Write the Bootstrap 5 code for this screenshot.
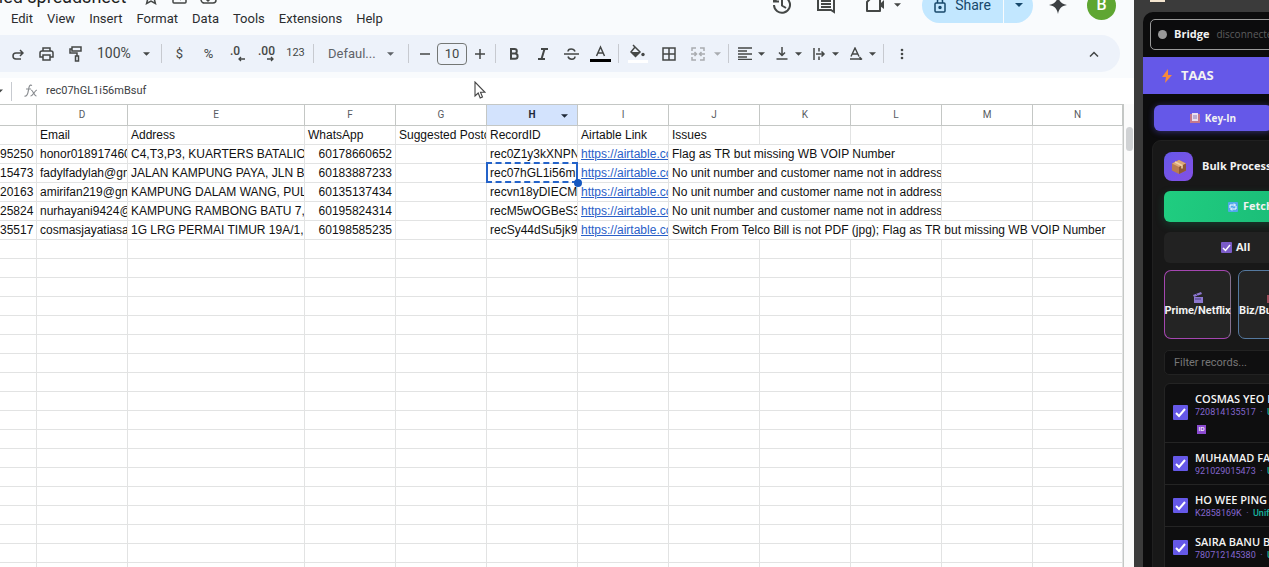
<!DOCTYPE html>
<html lang="en">
<head>
<meta charset="utf-8">
<meta name="viewport" content="width=device-width, initial-scale=1">
<title>Untitled spreadsheet</title>
<link rel="stylesheet" href="https://cdn.jsdelivr.net/npm/bootstrap@5.3.0/dist/css/bootstrap.min.css">
<style>
  body { font-family: Roboto, "Liberation Sans", sans-serif; background: #f9fbfd; color: #444746; }
  svg { display: block; flex: none; }
  button { border: 0; background: none; padding: 0; color: inherit; }
  .doc { min-width: 0; }
  .doc-top { margin-top: -24px; height: 59px; }
  .doc-names { padding-bottom: 6px; }
  .doc-title { font-size: 18px; line-height: 24px; margin-left: -39px; gap: 13px; color: #1f1f1f; }
  .menus { font-size: 13px; line-height: 20px; gap: 14px; padding-left: 11px; }
  .menus a { color: #2b2d2f; text-decoration: none; }
  .doc-actions { height: 58px; padding-right: 18px; }
  .meet { margin-left: 24px; }
  .share { height: 35px; margin-left: 21px; background: #c2e7ff; color: #17486b; border-radius: 18px; overflow: hidden; font-size: 14px; font-weight: 500; }
  .share button { height: 35px; }
  .share-main { width: 81px; gap: 9px; }
  .share-more { width: 30px; border-left: 1px solid #f9fbfd; }
  .avatar-dot { width: 29px; height: 29px; margin-left: 20px; background: #5fa632; color: #fff; font-size: 16px; font-weight: 500; }
  .tools { height: 37px; background: #edf2fa; border-radius: 0 19px 19px 0; margin-right: 14px; padding-left: 3px; font-size: 13px; }
  .tools button { height: 28px; display: flex; align-items: center; justify-content: center; flex: none; }
  .t { width: 29px; }
  .t-num { font-size: 11px; }
  .t-wide { width: 32px; }
  .t-step { width: 25px; }
  .tools .t-zoom { width: 68px; justify-content: space-between; padding: 0 8px 0 7px; font-size: 14px; }
  .tools .t-font { width: 88px; justify-content: space-between; padding: 0 11px; font-size: 13px; color: #5f6368; }
  .tools .t-drop { width: 37px; justify-content: flex-start; padding-left: 2px; }
  .t-drop svg:first-child { margin: 0 6px 0 4px; }
  .caret-off { margin: 0 4px 0 2px; color: #a9acb0; }
  .rule { width: 1px; height: 19px; background: #c7cad0; margin: 0 3px; flex: none; }
  .size-box { width: 30px; height: 22px; border: 1px solid #747775; border-radius: 4px; background: transparent; text-align: center; font-size: 13px; padding: 0; color: #444746; }
  .formula { height: 26px; margin-top: 6px; background: #fff; }
  .formula input { border: 0; background: transparent; font-size: 11px; padding: 0; color: #3c4043; width: 300px; }
  .grid-area { background: #fff; min-height: 0; }
  .cells { table-layout: fixed; border-collapse: separate; border-spacing: 0; font: 12px/18px "Liberation Sans", Arial, sans-serif; color: #111; width: 1123px; flex: none; }
  .cells th { height: 22px; padding: 0; border: solid #c4c7c5; border-width: 1px 1px 1px 0; font: 10px/20px Roboto, sans-serif; color: #575b5f; text-align: center; }
  .cells td { height: 19px; padding: 0 0 0 3px; border: solid #e2e3e3; border-width: 0 1px 1px 0; white-space: nowrap; overflow: hidden; }
  .cells th.on { background: #d3e3fd; font-weight: 700; color: #1f2937; position: relative; }
  .cells th.on svg { position: absolute; right: 9px; top: 9px; }
  .cells td.n { text-align: right; padding: 0 3px 0 0; }
  .cells td a { color: #2a60c8; }
  .cells td.picked { overflow: visible; position: relative; }
  .picked span { display: block; overflow: hidden; }
  .picked::before { content: ""; position: absolute; inset: -2px -1px -1px -1px; border: 2px dashed #2463c9; border-left-style: solid; border-right-style: solid; }
  .picked::after { content: ""; position: absolute; right: -5px; bottom: -5px; width: 8px; height: 8px; border-radius: 50%; background: #1558c0; z-index: 1; }
  .vscroll { border-left: 1px solid #c4c7c5; padding-top: 23px; background: #fbfbfb; }
  .vscroll div { width: 7px; height: 24px; border-radius: 4px; background: #d0d2d4; margin: 0 auto; }
  .pointer { position: absolute; left: 474px; top: 81px; z-index: 3; }

  .side { width: 135px; background: #3b3b3b; flex: none; padding: 12px 0 0 9px; font-family: "Open Sans", sans-serif; color: #f2f2f2; position: relative; }
  .side-top { position: absolute; left: 16px; top: 0; width: 15px; height: 2px; background: #f3e5cf; }
  .side-in { width: 300px; background: #0c0c0d; border-radius: 10px 0 0 0; padding-top: 7px; }
  .bridge { margin-left: 7px; height: 31px; border: 1px solid #9a9a9a; border-radius: 5px; padding-left: 7px; font-size: 11px; gap: 7px; }
  .bridge i { width: 9px; height: 9px; border-radius: 50%; background: #999; }
  .bridge span { color: #5d5d5d; font-size: 10px; }
  .brand { height: 37px; margin-top: 7px; background: #6558e8; padding-left: 19px; gap: 9px; font-size: 13px; }
  .keyin { margin: 11px 0 0 11px; width: 118px; height: 26px; background: #6558e8 !important; border-radius: 6px; font-size: 10px; font-weight: 700; gap: 5px; box-shadow: 0 1px 6px #6558e870; }
  .bulk { margin: 9px 0 0 9px; background: #181818; border: 1px solid #202020; border-radius: 9px; padding: 11px; height: 440px; }
  .bulk-ico { width: 29px; height: 29px; border-radius: 8px; background: linear-gradient(135deg, #6558e8, #8450e5); }
  .bulk-name { font-size: 11px; gap: 9px; }
  .bulk button { font-weight: 700; font-size: 11px; }
  .fetch { height: 31px; margin-top: 10px; background: linear-gradient(100deg, #20cd80, #14a96e) !important; border-radius: 6px; padding-left: 64px !important; gap: 5px; box-shadow: 0 3px 9px #10a86a40; }
  .all { height: 31px; margin-top: 10px; background: #222 !important; border-radius: 6px; padding-left: 57px !important; gap: 4px; }
  .tiles { gap: 7px; margin-top: 7px; font-family: Roboto, sans-serif; }
  .tile { width: 67px; height: 69px; border: 1px solid #a446b0 !important; border-right-color: #85718f !important; border-radius: 7px; background: #242424 !important; line-height: 13px; white-space: nowrap; }
  .tile.blue { border-color: #55799f !important; }
  .filter { height: 25px; width: 260px; margin-top: 11px; background: #0f0f10; border: 1px solid #222; border-radius: 5px; color: #ddd; font: 11px Roboto, sans-serif; padding: 0 9px; display: block; }
  .filter::placeholder { color: #777; }
  .people { margin-top: 8px; border: 1px solid #242424; border-radius: 6px 0 0 0; background: #0e0e0f; width: 260px; }
  .person { border-bottom: 1px solid #242424; padding: 0 0 0 8px; gap: 7px; height: 42px; white-space: nowrap; font-size: 11px; line-height: 15px; font-weight: 600; color: #f4f4f4; }
  .person.tall { height: 59px; padding-bottom: 2px; }
  .person small { display: block; font: 400 9px/13px Roboto, sans-serif; color: #8467cd; }
  .person em { font-style: normal; color: #16b3a0; font-weight: 500; }
  .person input { appearance: none; width: 15px; height: 15px; margin: 0; background: #6558e8 url("data:image/svg+xml,%3Csvg xmlns='http://www.w3.org/2000/svg' viewBox='0 0 15 15'%3E%3Cpath d='M3 8l3 3 6-7' fill='none' stroke='white' stroke-width='2'/%3E%3C/svg%3E"); border-radius: 1px; flex: none; }
  .id-chip { width: 9px; height: 9px; background: #8b4ad0; color: #fff; font-size: 6px; line-height: 9px; text-align: center; margin: 6px 0 0 2px; }
</style>
</head>
<body class="overflow-hidden">
<svg class="d-none">
  <symbol id="dn" viewBox="0 0 8 4"><path d="M0 0h8L4 4z" fill="currentColor"/></symbol>
</svg>
<div class="d-flex vh-100 overflow-hidden position-relative">
  <main class="doc flex-fill d-flex flex-column overflow-hidden">
    <header class="doc-top d-flex justify-content-between flex-shrink-0">
      <div class="doc-names d-flex flex-column justify-content-end">
        <div class="doc-title d-flex align-items-center text-nowrap">Untitled spreadsheet
          <svg class="ms-1" width="16" height="16" viewBox="0 0 16 16" fill="none" stroke="#444746" stroke-width="1.5"><path d="M8 1.500l2 4.500 5 .4-3.800 3.300 1.200 4.800L8 12l-4.400 2.500 1.200-4.800L1 6.400 6 6z"/></svg>
          <svg width="15" height="16" viewBox="0 0 15 16" fill="none" stroke="#444746" stroke-width="1.500"><rect x="1" y="2" width="13" height="12" rx="1"/><path d="M5 8h6M8 5l3 3-3 3"/></svg>
          <svg width="17" height="16" viewBox="0 0 17 16" fill="none" stroke="#444746" stroke-width="1.500"><path d="M5 14h8a3 3 0 0 0 0-6 5 5 0 0 0-9-1 3.500 3.500 0 0 0 1 7zM6 10l2 2 4-4"/></svg>
        </div>
        <nav class="menus d-flex"><a href="#">Edit</a><a href="#">View</a><a href="#">Insert</a><a href="#">Format</a><a href="#">Data</a><a href="#">Tools</a><a href="#">Extensions</a><a href="#">Help</a></nav>
      </div>
      <div class="doc-actions d-flex align-items-center">
        <button aria-label="Version history"><svg width="20" height="20" viewBox="0 0 20 20" fill="none" stroke="#444746" stroke-width="2"><path d="M2 10a8 8 0 1 0 2.500-6L2 6.500M2 1.500v5h5M10 5v5.500l4 2.500"/></svg></button>
        <button class="ms-4" aria-label="Comments"><svg width="20" height="20" viewBox="0 0 20 20" fill="none" stroke="#444746" stroke-width="2"><path d="M2 2h16v15l-3-2H2zM5 6h10M5 9h10M5 12h10"/></svg></button>
        <button class="meet d-flex align-items-center gap-2 ps-1" aria-label="Meet"><svg width="22" height="20" viewBox="0 0 22 20"><path d="M7 3h9v13H3V7z" fill="none" stroke="#444746" stroke-width="2" stroke-linejoin="round"/><path d="M16 9l4-4v9l-4-3z" fill="#444746"/></svg><svg width="7" height="4"><use href="#dn"/></svg></button>
        <div class="share d-flex">
          <button class="share-main d-flex align-items-center justify-content-center"><svg width="12" height="16" viewBox="0 0 12 16" fill="none" stroke="currentColor" stroke-width="1.500"><rect x="1" y="6" width="10" height="9" rx="1"/><path d="M3.500 6V4a2.500 2.500 0 0 1 5 0v2"/><circle cx="6" cy="10.500" r="1" fill="currentColor"/></svg>Share</button>
          <button class="share-more d-flex align-items-center justify-content-center" aria-label="Share options"><svg width="8" height="4"><use href="#dn"/></svg></button>
        </div>
        <svg class="ms-3" width="18" height="18" viewBox="0 0 18 18" fill="#3c4043"><path d="M9 0c1 5.500 3.500 8 9 9-5.500 1-8 3.500-9 9-1-5.500-3.500-8-9-9 5.500-1 8-3.500 9-9z"/></svg>
        <button class="avatar-dot rounded-circle">B</button>
      </div>
    </header>

    <div class="tools d-flex align-items-center flex-shrink-0" role="toolbar">
      <button class="t" aria-label="Redo"><svg width="12" height="12" viewBox="0 0 12 12" fill="none" stroke="currentColor" stroke-width="1.500"><path d="M8 2l3 3-3 3M11 5H4a3 3 0 0 0 0 6h5"/></svg></button>
      <button class="t" aria-label="Print"><svg width="15" height="14" viewBox="0 0 15 14" fill="none" stroke="currentColor" stroke-width="1.500"><path d="M4 4V1h7v3M4 10H1V6q0-2 2-2h9q2 0 2 2v4h-3M4 8h7v5H4z"/></svg></button>
      <button class="t" aria-label="Paint format"><svg width="14" height="16" viewBox="0 0 14 16" fill="none" stroke="currentColor" stroke-width="1.500"><path d="M3 1h9v4H3zM3 3H1v4h7v3M6.500 10h3v5h-3z"/></svg></button>
      <button class="t-zoom">100%<svg width="7" height="4"><use href="#dn"/></svg></button>
      <span class="rule"></span>
      <button class="t">$</button>
      <button class="t">%</button>
      <button class="t" aria-label="Decrease decimals"><svg width="16" height="16" viewBox="0 0 16 16"><text x="0" y="9" font-size="12" font-weight="500" fill="currentColor">.0</text><path d="M15 13H9M11 11l-2 2 2 2" fill="none" stroke="currentColor" stroke-width="1.300"/></svg></button>
      <button class="t" aria-label="Increase decimals"><svg width="18" height="16" viewBox="0 0 18 16"><text x="0" y="9" font-size="12" font-weight="500" fill="currentColor">.00</text><path d="M9 13h6M13 11l2 2-2 2" fill="none" stroke="currentColor" stroke-width="1.300"/></svg></button>
      <button class="t t-num">123</button>
      <span class="rule"></span>
      <button class="t-font">Defaul...<svg width="7" height="4"><use href="#dn"/></svg></button>
      <span class="rule"></span>
      <button class="t-step" aria-label="Smaller"><svg width="10" height="10"><path d="M0 5h10" stroke="currentColor" stroke-width="1.500"/></svg></button>
      <input class="size-box" aria-label="Font size" value="10">
      <button class="t-step" aria-label="Larger"><svg width="10" height="10"><path d="M0 5h10M5 0v10" stroke="currentColor" stroke-width="1.500"/></svg></button>
      <span class="rule"></span>
      <button class="t" aria-label="Bold"><svg width="10" height="12" viewBox="0 0 10 12" fill="none" stroke="currentColor" stroke-width="2"><path d="M2 1h3.500a2.300 2.300 0 0 1 0 4.600H2zM2 5.600h4a2.600 2.600 0 0 1 0 5.200H2z"/></svg></button>
      <button class="t" aria-label="Italic"><svg width="10" height="12" viewBox="0 0 10 12" fill="none" stroke="currentColor" stroke-width="2"><path d="M3 1h7M0 11h7M6.500 1l-3 10"/></svg></button>
      <button class="t" aria-label="Strikethrough"><svg width="15" height="12" viewBox="0 0 15 12" fill="none" stroke="currentColor" stroke-width="1.500"><path d="M0 6h15M11 3.500C10 0 4 0 4 3.500M4 8.500c1 3.500 7 3.500 7 0"/></svg></button>
      <button class="t" aria-label="Text color"><svg width="21" height="18" viewBox="0 0 21 18"><path d="M6.500 11L10.500 2l4 9M8 8h5" fill="none" stroke="currentColor" stroke-width="1.500"/><path d="M0 14h21v3H0z" fill="#000"/></svg></button>
      <span class="rule"></span>
      <button class="t-wide" aria-label="Fill color"><svg width="20" height="20" viewBox="0 0 20 20"><path d="M5 1l2 2M7 3l5 5-4.500 4.500L3 8z" fill="none" stroke="currentColor" stroke-width="1.500"/><path d="M3 8h9l-4.500 4.500z" fill="currentColor"/><circle cx="15" cy="10.500" r="1.700" fill="currentColor"/><path d="M0 16h20v3H0z" fill="#fff"/></svg></button>
      <button class="t" aria-label="Borders"><svg width="14" height="14" viewBox="0 0 14 14" fill="none" stroke="currentColor" stroke-width="1.500"><path d="M1 1h12v12H1zM7 1v12M1 7h12"/></svg></button>
      <button class="t" aria-label="Merge cells"><svg width="14" height="14" viewBox="0 0 14 14" fill="none" stroke="#a9acb0" stroke-width="1.500"><path d="M5 1H1v3M9 1h4v3M5 13H1v-3M9 13h4v-3M0 7h5M3.500 5l2 2-2 2M14 7H9M10.500 5l-2 2 2 2"/></svg></button>
      <svg width="7" height="4" class="caret-off"><use href="#dn"/></svg>
      <span class="rule"></span>
      <button class="t-drop" aria-label="Align"><svg width="14" height="13" viewBox="0 0 14 13" stroke="currentColor" stroke-width="1.500"><path d="M0 1h14M0 4h9M0 7h14M0 10h9M0 12.500h14"/></svg><svg width="7" height="4"><use href="#dn"/></svg></button>
      <button class="t-drop" aria-label="Vertical align"><svg width="14" height="13" viewBox="0 0 14 13" fill="none" stroke="currentColor" stroke-width="1.500"><path d="M7 0v8M4 5.500l3 3 3-3M1.500 12h11"/></svg><svg width="7" height="4"><use href="#dn"/></svg></button>
      <button class="t-drop" aria-label="Wrapping"><svg width="14" height="12" viewBox="0 0 14 12" fill="none" stroke="currentColor" stroke-width="1.500"><path d="M2 0v12M7 0v3.500M7 8.500V12M4 6h8M9.500 3.500L12 6 9.500 8.500"/></svg><svg width="7" height="4"><use href="#dn"/></svg></button>
      <button class="t-drop" aria-label="Rotation"><svg width="14" height="13" viewBox="0 0 14 13" fill="none" stroke="currentColor" stroke-width="1.400"><path d="M2 9.500L6 1l4 8.500M3.500 7h5M1 12h11M10.500 10l2 2-2 2"/></svg><svg width="7" height="4"><use href="#dn"/></svg></button>
      <span class="rule"></span>
      <button class="t" aria-label="More"><svg width="4" height="12" fill="currentColor"><circle cx="2" cy="2" r="1.300"/><circle cx="2" cy="6" r="1.300"/><circle cx="2" cy="10" r="1.300"/></svg></button>
      <button class="t ms-auto me-2 pe-2" aria-label="Hide menus"><svg width="10" height="6" viewBox="0 0 10 6" fill="none" stroke="currentColor" stroke-width="1.500"><path d="M1 5.500l4-4 4 4"/></svg></button>
    </div>

    <div class="formula d-flex align-items-center flex-shrink-0">
      <svg width="3" height="4" viewBox="0 0 4 4"><path d="M0 0h4L0 4z" fill="#444746"/></svg>
      <span class="rule ms-2 me-2"></span>
      <label for="fx" class="ms-1 me-2"><svg width="14" height="14" viewBox="0 0 14 14" fill="none" stroke="#8a8d91" stroke-width="1.200"><path d="M8 1.500C5.500 0 5 3 4.500 6S3 13 .5 12M2 5h5M7 6c2 0 3 6 5.500 6M13 6c-2 0-4 6-6.500 6"/></svg></label>
      <input id="fx" value="rec07hGL1i56mBsuf">
    </div>

    <div class="grid-area flex-fill d-flex overflow-hidden">
      <table class="cells">
        <colgroup><col style="width:37px"><col style="width:91px"><col style="width:177px"><col span="8" style="width:91px"><col style="width:90px"></colgroup>
        <thead><tr><th></th><th>D</th><th>E</th><th>F</th><th>G</th><th class="on">H<svg width="7" height="4"><use href="#dn"/></svg></th><th>I</th><th>J</th><th>K</th><th>L</th><th>M</th><th>N</th></tr></thead>
        <tbody id="rows">
          <tr><td></td><td>Email</td><td>Address</td><td>WhatsApp</td><td>Suggested Postc</td><td>RecordID</td><td>Airtable Link</td><td>Issues</td><td></td><td></td><td></td><td></td></tr>
          <tr><td class="n">95250</td><td>honor0189174600</td><td>C4,T3,P3, KUARTERS BATALIO</td><td class="n">60178660652</td><td></td><td>rec0Z1y3kXNPN</td><td><a href="#">https://airtable.co</a></td><td colspan="3">Flag as TR but missing WB VOIP Number</td><td></td><td></td></tr>
          <tr><td class="n">15473</td><td>fadylfadylah@gm</td><td>JALAN KAMPUNG PAYA, JLN B</td><td class="n">60183887233</td><td></td><td class="picked"><span>rec07hGL1i56mB</span></td><td><a href="#">https://airtable.co</a></td><td colspan="3">No unit number and customer name not in address</td><td></td><td></td></tr>
          <tr><td class="n">20163</td><td>amirifan219@gm</td><td>KAMPUNG DALAM WANG, PUL</td><td class="n">60135137434</td><td></td><td>recvn18yDIECM</td><td><a href="#">https://airtable.co</a></td><td colspan="3">No unit number and customer name not in address</td><td></td><td></td></tr>
          <tr><td class="n">25824</td><td>nurhayani9424@</td><td>KAMPUNG RAMBONG BATU 7,</td><td class="n">60195824314</td><td></td><td>recM5wOGBeS3</td><td><a href="#">https://airtable.co</a></td><td colspan="3">No unit number and customer name not in address</td><td></td><td></td></tr>
          <tr><td class="n">35517</td><td>cosmasjayatiasa</td><td>1G LRG PERMAI TIMUR 19A/1,</td><td class="n">60198585235</td><td></td><td>recSy44dSu5jk9</td><td><a href="#">https://airtable.co</a></td><td colspan="5">Switch From Telco Bill is not PDF (jpg); Flag as TR but missing WB VOIP Number</td></tr>
        </tbody>
      </table>
      <div class="vscroll flex-fill"><div></div></div>
    </div>
  </main>
  <svg class="pointer" width="12" height="18" viewBox="0 0 12 18"><path d="M1 1v14l3.200-3 2 5 2.300-1-2-4.700H11z" fill="#fff" stroke="#444" stroke-width="1.100"/></svg>

  <aside class="side overflow-hidden">
    <div class="side-top"></div>
    <div class="side-in">
      <div class="bridge d-flex align-items-center"><i></i><b>Bridge</b><span>disconnected</span></div>
      <div class="brand d-flex align-items-center"><svg width="10" height="14" viewBox="0 0 10 14"><path d="M6 0L0 8h4l-1 6 7-8H6z" fill="#f58a3c"/></svg><b>TAAS</b></div>
      <button class="keyin d-flex align-items-center justify-content-center"><svg width="10" height="10" viewBox="0 0 10 10"><path d="M0 1h10v9H0z" fill="#c5788c"/><path d="M2 0h6v8H2z" fill="#eadff0"/><path d="M3 3h4M3 5h4" stroke="#8b7bb5"/></svg>Key-In</button>
      <section class="bulk">
        <div class="bulk-name d-flex align-items-center"><span class="bulk-ico d-flex align-items-center justify-content-center"><svg width="14" height="14" viewBox="0 0 14 14"><path d="M7 0l7 3.500v7L7 14l-7-3.500v-7z" fill="#b97b50"/><path d="M0 3.500L7 0l7 3.500L7 7z" fill="#dca878"/><path d="M7 7l7-3.500v7L7 14z" fill="#8f5836"/><path d="M3 2l7 3.500v3" fill="none" stroke="#f0d2a8" stroke-width="1.500"/></svg></span><b>Bulk Process</b></div>
        <button class="fetch w-100 d-flex align-items-center"><svg width="10" height="10" viewBox="0 0 10 10"><rect width="10" height="10" rx="1" fill="#51a8ed"/><path d="M2 6V3h5M8 4v3H3M6 1.500L7.500 3 6 4.500M4 5.500L2.500 7 4 8.500" fill="none" stroke="#fff"/></svg>Fetch</button>
        <button class="all w-100 d-flex align-items-center"><svg width="11" height="11" viewBox="0 0 11 11"><rect width="11" height="11" rx="1" fill="#7b5cc8"/><path d="M2 6l2.500 2.500L9 3" fill="none" stroke="#fff" stroke-width="1.500"/></svg>All</button>
        <div class="tiles d-flex">
          <button class="tile d-flex flex-column align-items-center justify-content-center"><svg width="10" height="12" viewBox="0 0 10 12"><path d="M1 5h9v6H1zM0 3l8-3 1 2-8 3z" fill="#8d78cf"/><path d="M2 7h6M3 2l2 2" stroke="#493a80"/></svg>Prime/Netflix</button>
          <button class="tile blue d-flex flex-column align-items-center justify-content-center"><svg width="10" height="12" viewBox="0 0 10 12"><path d="M0 3h10v8H0z" fill="#9b4a58"/></svg>Biz/Business</button>
        </div>
        <input class="filter" aria-label="Filter records" placeholder="Filter records...">
        <div class="people">
          <label class="person tall d-flex align-items-center"><input type="checkbox" checked><span>COSMAS YEO B<small>720814135517 &nbsp;·&nbsp; <em>Unifi</em></small><span class="id-chip d-block">ID</span></span></label>
          <label class="person d-flex align-items-center"><input type="checkbox" checked><span>MUHAMAD FADYL<small>921029015473 &nbsp;·&nbsp; <em>Unifi</em></small></span></label>
          <label class="person d-flex align-items-center"><input type="checkbox" checked><span>HO WEE PING<small>K2858169K &nbsp;·&nbsp; <em>Unifi</em></small></span></label>
          <label class="person d-flex align-items-center"><input type="checkbox" checked><span>SAIRA BANU BINTI<small>780712145380 &nbsp;·&nbsp; <em>Unifi</em></small></span></label>
        </div>
      </section>
    </div>
  </aside>
</div>
<script src="https://cdn.jsdelivr.net/npm/bootstrap@5.3.0/dist/js/bootstrap.bundle.min.js"></script>
<script>
  // Empty rows below the data
  document.getElementById('rows').insertAdjacentHTML('beforeend', ('<tr>' + '<td></td>'.repeat(12) + '</tr>').repeat(30));
</script>
</body>
</html>
